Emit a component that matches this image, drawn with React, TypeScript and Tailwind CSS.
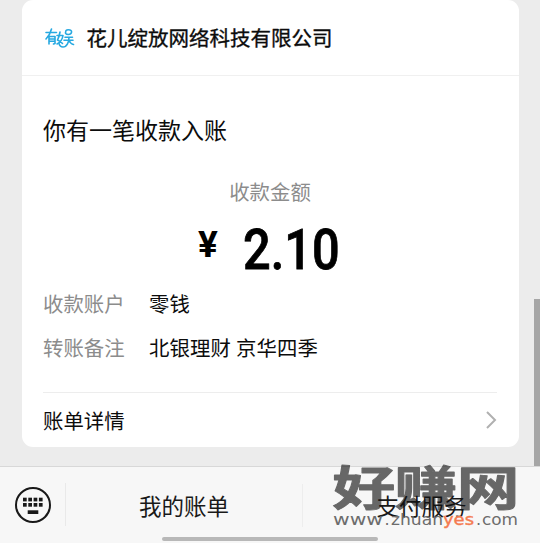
import React from "react";

function BrandLogo() {
  return (
    <svg viewBox="0 0 30 22" className="h-[22px] w-[30px] shrink-0" fill="none" stroke="#27a9e1" strokeWidth="1.6" strokeLinecap="round" strokeLinejoin="round">
      <path d="M1 5.5H11.5M6.5 2C5.5 6 4 9 1 12M4 9.5V17M4 9.5H10V16.5L8.5 17M4.5 12H10M4.5 14.3H10" />
      <path d="M15 5C14.5 8 14 10 12.5 13C15 14 16 15 17.5 16.5M12 8.5H18C17.5 12 16 15 12 17" />
      <path d="M21 3.5C20 6.5 20.5 7.5 23.5 7.5C27 7.5 27.5 3.5 25 3C23 2.6 21.5 3 21 3.5M20 10.3H27.5M19 13.3H28M24 10.3C24 15 22 20 18 20C15.5 20 14.5 18.5 14 16.5M24 13.5C25 15.5 26 17 28.5 17.5" />
    </svg>
  );
}

function KeyboardIcon() {
  return (
    <svg viewBox="0 0 38 38" className="h-[38px] w-[38px] shrink-0" fill="#191919">
      <circle cx="19" cy="19" r="17" fill="none" stroke="#191919" strokeWidth="2" />
      {[9, 14.3, 19.6, 24.9].map((x) => (
        <g key={x}>
          <rect x={x} y="11.7" width="3.7" height="3.7" />
          <rect x={x} y="17" width="3.7" height="3.7" />
        </g>
      ))}
      <rect x="13.7" y="24.3" width="10.6" height="3.7" />
    </svg>
  );
}

function DetailRow({ label, value }: { label: string; value: string }) {
  return (
    <div className="flex h-11 items-center">
      <span className="w-[106px] text-[#8c8c8c]">{label}</span>
      <span className="tracking-[0.15px]">{value}</span>
    </div>
  );
}

function Watermark() {
  return (
    <svg viewBox="0 0 190 72" className="pointer-events-none absolute left-[330px] top-[461px] h-[72px] w-[190px]">
      <g opacity="0.62" transform="translate(2.5 43.8) scale(1.28 0.94)">
        <text x="0" y="0" fontSize="49" fontWeight="700" fill="#101010" stroke="#101010" strokeWidth="1" strokeLinejoin="round" textLength="146" className="font-['Noto_Sans_CJK_SC',sans-serif]">好赚网</text>
      </g>
      <g fontSize="16" fill="#6c6c6c" fontFamily="DejaVu Sans, sans-serif">
        <text x="3" y="63.5" textLength="50" lengthAdjust="spacingAndGlyphs">www</text>
        <text x="54.5" y="63.5">.</text>
        <text x="61" y="63.5" textLength="52" lengthAdjust="spacingAndGlyphs">zhuan</text>
        <text x="113" y="63.5" textLength="31" lengthAdjust="spacingAndGlyphs" fill="#f47b50" stroke="#f47b50" strokeWidth="0.4">yes</text>
        <text x="146" y="63.5">.</text>
        <text x="152" y="63.5" textLength="36" lengthAdjust="spacingAndGlyphs">com</text>
      </g>
    </svg>
  );
}

export default function App() {
  return (
    <div className="relative flex h-[543px] w-[540px] flex-col overflow-hidden bg-[#ececec] font-['Noto_Sans_CJK_SC',sans-serif] text-[20.4px] leading-none text-[#0c0c0c]">
      <main className="h-[466px] shrink-0 px-[21.5px]">
        <section className="flex h-[447px] flex-col rounded-[11px] bg-white">
          <header className="flex h-[76px] shrink-0 items-center border-b border-[#f0f0f0] pl-[23px]">
            <BrandLogo />
            <h1 className="ml-3 text-[20.5px] [-webkit-text-stroke:0.35px_#0c0c0c]">花儿绽放网络科技有限公司</h1>
          </header>
          <div className="flex grow flex-col px-[21.5px]">
            <h2 className="mt-[42px] text-[23px]">你有一笔收款入账</h2>
            <p className="mt-[40px] text-center text-[#8c8c8c]">收款金额</p>
            <div className="mt-[19px] flex h-[60px] font-['Roboto',sans-serif] font-medium text-black">
              <span className="ml-[155px] mt-[3px] w-[45px] text-[37px] font-bold leading-[44px]">¥</span>
              <span className="inline-block origin-left scale-x-[.87] text-[56px] leading-[60px] [-webkit-text-stroke:0.8px_#000]">2.10</span>
            </div>
            <div className="mt-px">
              <DetailRow label="收款账户" value="零钱" />
              <DetailRow label="转账备注" value="北银理财 京华四季" />
            </div>
            <footer className="mt-auto flex h-[55px] items-center justify-between border-t border-[#ededed]">
              <span>账单详情</span>
              <svg viewBox="0 0 12 20" className="h-5 w-3" fill="none" stroke="#b0b0b0" strokeWidth="2"><path d="M2 2L10 10L2 18" /></svg>
            </footer>
          </div>
        </section>
      </main>
      <nav className="relative flex h-[77px] shrink-0 items-start border-t border-[#d8d8d8] bg-[#f7f7f7] text-[22.5px] text-[#191919]">
        <div className="mt-4 flex h-[43px] w-[66px] items-center border-r border-[#e9e9e9] pl-[14px]"><KeyboardIcon /></div>
        <div className="mt-[17px] flex h-[43px] w-[237px] items-center justify-center border-r border-[#ededed]">我的账单</div>
        <div className="mt-[17px] flex h-[43px] grow items-center justify-center">支付服务</div>
        <div className="absolute left-[162px] top-[70px] h-1 w-[216px] rounded-full bg-[#b8b8b8]" />
      </nav>
      <div className="absolute left-[534px] top-[299px] h-[167px] w-[6px] bg-[#a6a6a6]" />
      <Watermark />
    </div>
  );
}
